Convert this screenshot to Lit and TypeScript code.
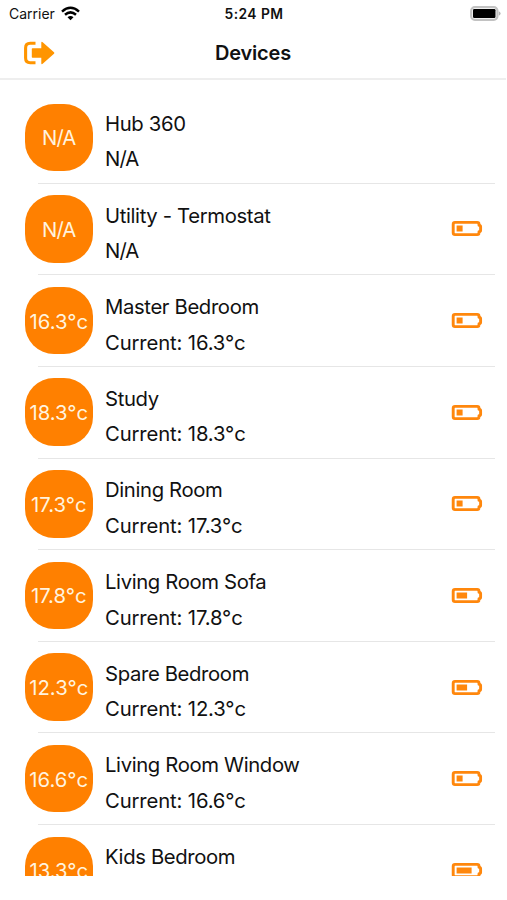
import { LitElement, html, css, svg } from "lit";
import { customElement, property } from "lit/decorators.js";

interface Device {
  name: string;
  temp: string | null;
  battery: number | null;
}

const DEVICES: Device[] = [
  { name: "Hub 360", temp: null, battery: null },
  { name: "Utility - Termostat", temp: null, battery: 1 },
  { name: "Master Bedroom", temp: "16.3°c", battery: 1 },
  { name: "Study", temp: "18.3°c", battery: 1 },
  { name: "Dining Room", temp: "17.3°c", battery: 1 },
  { name: "Living Room Sofa", temp: "17.8°c", battery: 2 },
  { name: "Spare Bedroom", temp: "12.3°c", battery: 2 },
  { name: "Living Room Window", temp: "16.6°c", battery: 1 },
  { name: "Kids Bedroom", temp: "13.3°c", battery: 3 },
];

const FILL_WIDTHS = [0, 6, 10.5, 15];

@customElement("battery-level")
export class BatteryLevel extends LitElement {
  @property({ type: Number }) level = 1;

  static styles = css`
    :host { display: block; width: 32px; height: 17px; }
    svg { display: block; }
  `;

  render() {
    return html`<svg width="32" height="17" viewBox="0 0 32 17">
      <path d="M4 2.4H26.2Q28 2.4 28 4.2V5.2Q29.6 5.4 29.6 6.8V10.2Q29.6 11.6 28 11.8V12.8Q28 14.6 26.2 14.6H4Q2.2 14.6 2.2 12.8V4.2Q2.2 2.4 4 2.4Z"
        fill="none" stroke="#ff870c" stroke-width="2.9" stroke-linejoin="round" />
      ${svg`<rect x="5.6" y="5.5" width=${FILL_WIDTHS[this.level]} height="6" fill="#ff870c" />`}
    </svg>`;
  }
}

@customElement("device-row")
export class DeviceRow extends LitElement {
  @property({ attribute: false }) device!: Device;

  static styles = css`
    :host {
      display: flex;
      align-items: center;
      box-sizing: border-box;
      height: 91.64px;
      padding: 0 24px 0 25px;
      position: relative;
    }
    :host::after {
      content: "";
      position: absolute;
      left: 38px;
      right: 12px;
      bottom: -0.5px;
      height: 1px;
      background: #e6e6e6;
    }
    .badge {
      width: 67.5px;
      height: 67.5px;
      border-radius: 29px;
      background: #ff8000;
      color: #fff3df;
      display: flex;
      align-items: center;
      justify-content: center;
      flex: none;
      white-space: nowrap;
      font-size: 20.3px;
      letter-spacing: 0;
      padding-top: 1px;
      box-sizing: border-box;
    }
    .badge.empty { letter-spacing: -0.9px; }
    .labels {
      flex: 1;
      margin-left: 12.5px;
      padding-top: 8.2px;
      white-space: nowrap;
      line-height: 35.5px;
      font-size: 20.3px;
    }
    .name { letter-spacing: -0.36px; }
    .reading { letter-spacing: -0.14px; }
    .reading.empty { letter-spacing: -0.9px; }
  `;

  render() {
    const { name, temp, battery } = this.device;
    const empty = temp ? "" : "empty";
    return html`
      <div class="badge ${empty}">${temp ?? "N/A"}</div>
      <div class="labels">
        <div class="name">${name}</div>
        <div class="reading ${empty}">${temp ? `Current: ${temp}` : "N/A"}</div>
      </div>
      ${battery === null ? "" : html`<battery-level .level=${battery}></battery-level>`}
    `;
  }
}

@customElement("app-root")
export class AppRoot extends LitElement {
  static styles = css`
    :host {
      display: flex;
      flex-direction: column;
      height: 900px;
      overflow: hidden;
      background: #fff;
      color: #111;
      font-family: Inter, "Liberation Sans", sans-serif;
      font-size: 20px;
    }
    .status {
      display: grid;
      grid-template-columns: 1fr auto 1fr;
      align-items: center;
      height: 27px;
      padding: 0 6px 0 9px;
      font-size: 14px;
      flex: none;
    }
    .carrier { display: flex; align-items: center; gap: 6px; }
    .time { font-weight: 600; font-size: 13.8px; letter-spacing: 0.45px; margin-right: 2px; }
    .power { justify-self: end; display: block; }
    .bar {
      display: grid;
      grid-template-columns: 1fr auto 1fr;
      align-items: center;
      height: 51px;
      padding: 0 24px;
      border-bottom: 2px solid #eeeeee;
      margin-right: 1px;
      flex: none;
    }
    .title { font-weight: 600; font-size: 20px; letter-spacing: -0.2px; }
    .exit { display: block; }
    .list {
      height: 796px;
      box-sizing: border-box;
      padding-top: 11.5px;
      overflow: hidden;
      flex: none;
    }
  `;

  render() {
    return html`
      <div class="status">
        <div class="carrier">
          <span>Carrier</span>
          <svg width="19" height="15" viewBox="0 0 19 15" fill="none" stroke="#000" stroke-width="2.5">
            <path d="M1 5.6Q9.5-2 18 5.6" />
            <path d="M4 8.8Q9.5 4 15 8.8" />
            <path d="M6.5 11.3Q9.5 8.6 12.5 11.3L9.5 14.2Z" fill="#000" stroke="none" />
          </svg>
        </div>
        <div class="time">5:24 PM</div>
        <svg class="power" width="31" height="15" viewBox="0 0 31 15">
          <rect x="1.2" y="1.2" width="26.2" height="12.6" rx="3.6" fill="#fff" stroke="#c2c2c2" stroke-width="2.2" />
          <rect x="3" y="3" width="22.5" height="9" rx="1.2" fill="#000" />
          <path d="M28.8 5.2Q30.6 6 30.6 7.5T28.8 9.8Z" fill="#b5b5b5" />
        </svg>
      </div>
      <div class="bar">
        <svg class="exit" width="31" height="24" viewBox="0 0 31 24">
          <path d="M11.5 2.3H6.2Q1.6 2.3 1.6 7V17Q1.6 21.7 6.2 21.7H11.5" fill="none" stroke="#ff9500" stroke-width="3.1" />
          <path d="M8.5 7.3H17.3V1.6Q17.5.3 18.7 1.2L30 11.2Q30.8 12 30 12.8L18.7 22.8Q17.5 23.7 17.3 22.4V16.7H8.5Q7.8 16.7 7.8 15.9V8.1Q7.8 7.3 8.5 7.3Z" fill="#ff9500" />
        </svg>
        <div class="title">Devices</div>
      </div>
      <div class="list">
        ${DEVICES.map((d) => html`<device-row .device=${d}></device-row>`)}
      </div>
    `;
  }
}
